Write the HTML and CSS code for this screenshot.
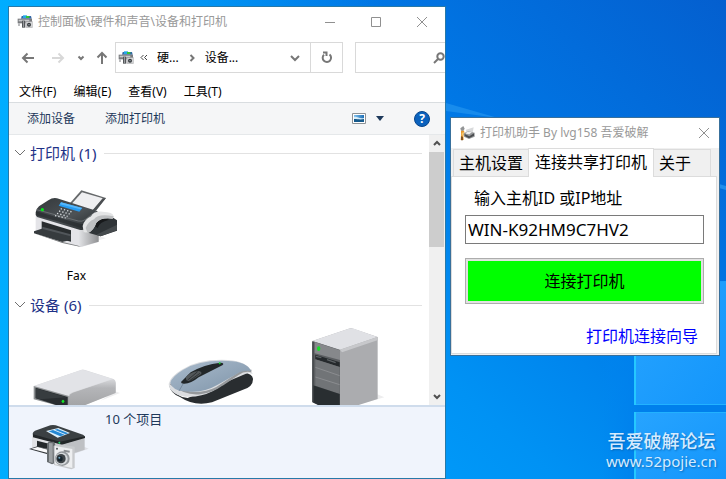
FILE: index.html
```html
<!DOCTYPE html>
<html lang="zh-CN">
<head>
    <meta charset="utf-8">
    <title>设备和打印机</title>
    <link rel="stylesheet" href="styles.css">
</head>
<body>
    <svg width="0" height="0" class="defs" aria-hidden="true">
        <defs>
            <linearGradient id="body-dark" x1="0" y1="0" x2="1" y2="1">
                <stop offset="0" stop-color="#33383b"/><stop offset=".55" stop-color="#4d5256"/><stop offset="1" stop-color="#24282a"/>
            </linearGradient>
            <linearGradient id="side-gray" x1="0" y1="0" x2="1" y2="0">
                <stop offset="0" stop-color="#e4e5e8"/><stop offset="1" stop-color="#8f9092"/>
            </linearGradient>
            <linearGradient id="drive-side" x1="0" y1="0" x2="0" y2="1">
                <stop offset="0" stop-color="#d8d9dc"/><stop offset=".35" stop-color="#b4b5b8"/><stop offset="1" stop-color="#a4a5a7"/>
            </linearGradient>
            <linearGradient id="mouse-top" x1="0" y1="0" x2="1" y2="1">
                <stop offset="0" stop-color="#abbccd"/><stop offset="1" stop-color="#7d93a8"/>
            </linearGradient>
            <linearGradient id="sky" x1="0" y1="0" x2="1" y2="0">
                <stop offset="0" stop-color="#7fc0ee"/><stop offset="1" stop-color="#1d6fb5"/>
            </linearGradient>
            <symbol id="devices" viewBox="0 0 48 48">
                <path d="M14 6h28l2 8H12z" fill="#3468a8"/>
                <path d="M18 4h12v8H18z" fill="#25a8e8"/><path d="M27 6h10v6H27z" fill="#33c532"/>
                <path d="M2 14h43v14H2z" fill="#797b7e"/>
                <path d="M5 17h32v5H5z" fill="#c8c9cb"/>
                <path d="M3 27h6v9H3z" fill="#bbbcbe"/>
                <path d="M15 20h9v21h-9z" fill="#54575a"/><path d="M18 20h3v20h-3z" fill="#989b9e"/>
                <path d="M25 22h22v19H25z" fill="#a9aaac"/><path d="M28 24h19v15H28z" fill="#d3d4d6"/>
                <circle cx="36" cy="32" r="6" fill="#35383b"/><circle cx="36" cy="32" r="2" fill="#aeb9c4"/>
            </symbol>
        </defs>
    </svg>

    <svg class="wallpaper" viewBox="0 0 726 479" preserveAspectRatio="none" aria-hidden="true">
        <defs>
            <linearGradient id="wall" x1="726" y1="0" x2="330" y2="430" gradientUnits="userSpaceOnUse">
                <stop offset="0" stop-color="#045fcf"/>
                <stop offset=".45" stop-color="#0078e6"/>
                <stop offset=".8" stop-color="#0092f4"/>
                <stop offset="1" stop-color="#009cfa"/>
            </linearGradient>
            <linearGradient id="edge" x1="0" y1="0" x2="1" y2="0">
                <stop offset="0" stop-color="#00adff"/><stop offset="1" stop-color="#00a0fa" stop-opacity="0"/>
            </linearGradient>
            <linearGradient id="shade" x1="600" y1="0" x2="640" y2="0" gradientUnits="userSpaceOnUse">
                <stop offset="0" stop-color="#0086f0" stop-opacity="0"/><stop offset="1" stop-color="#0080ec"/>
            </linearGradient>
            <linearGradient id="pane" x1="0" y1="0" x2="1" y2="1">
                <stop offset="0" stop-color="#27a4ff"/><stop offset="1" stop-color="#1496fb"/>
            </linearGradient>
        </defs>
        <rect width="726" height="479" fill="url(#wall)"/>
        <rect width="380" height="479" fill="url(#edge)"/>
        <path d="M446 103l52 15-52-7z" fill="#35a4f5" opacity=".45"/>
        <path d="M719 184l7 2v4l-7-2z" fill="#35a4f5" opacity=".6"/>
        <path d="M600 356h126v123H600z" fill="url(#shade)"/>
        <path d="M635 283l91-2v124h-91z" fill="url(#pane)"/>
        <path d="M635 412h91v67h-91z" fill="url(#pane)"/>
        <path d="M634 356h2v49h-2zM634 412h2v67h-2z" fill="#25c8ff"/>
        <path d="M636 404h90v1h-90zM636 412h90v1h-90z" fill="#22b2ff"/>
    </svg>

    <main class="explorer">
        <header class="titlebar">
            <svg class="app-icon"><use href="#devices"/></svg>
            <h1 class="title">控制面板\硬件和声音\设备和打印机</h1>
            <div class="caption-buttons">
                <button aria-label="最小化"><svg width="12" height="12" viewBox="0 0 12 12"><path d="M1 6.5h10"/></svg></button>
                <button aria-label="最大化"><svg width="12" height="12" viewBox="0 0 12 12"><path d="M1.5 1.5h9v9h-9z"/></svg></button>
                <button aria-label="关闭"><svg width="12" height="12" viewBox="0 0 12 12"><path d="M1 1l10 10M11 1L1 11"/></svg></button>
            </div>
        </header>

        <nav class="navbar">
            <button class="nav-btn" aria-label="后退"><svg width="14" height="12" viewBox="0 0 14 12"><path d="M13 6H2M6.5 1.5L2 6l4.5 4.5"/></svg></button>
            <button class="nav-btn nav-off" aria-label="前进" disabled><svg width="14" height="12" viewBox="0 0 14 12"><path d="M1 6h11M7.5 1.5L12 6l-4.500 4.5"/></svg></button>
            <button class="nav-btn nav-recent" aria-label="最近"><svg width="8" height="6" viewBox="0 0 8 6"><path d="M1.5 1.5L4 4l2.500-2.500"/></svg></button>
            <button class="nav-btn nav-up" aria-label="上移"><svg width="12" height="14" viewBox="0 0 12 14"><path d="M6 13V2M1.5 6.5L6 2l4.5 4.5"/></svg></button>
            <div class="address">
                <svg class="app-icon"><use href="#devices"/></svg>
                <svg class="crumb-more" width="8" height="8" viewBox="0 0 8 8"><path d="M3.5 1L1 3.5 3.5 6M7 1L4.5 3.5 7 6"/></svg>
                <a href="#" class="crumb">硬...</a>
                <svg width="6" height="8" viewBox="0 0 6 8"><path d="M1.5 1l3 3-3 3"/></svg>
                <a href="#" class="crumb">设备...</a>
                <button class="address-drop" aria-label="展开"><svg width="10" height="8" viewBox="0 0 10 8"><path d="M1 2l4 4 4-4"/></svg></button>
                <button class="refresh" aria-label="刷新"><svg width="12" height="13" viewBox="0 0 12 13"><path d="M8.5 3.5A4.2 4.2 0 1 1 3 3.7M2 1.5h3.5V5"/></svg></button>
            </div>
            <div class="search">
                <input type="search" aria-label="搜索">
                <svg width="12" height="12" viewBox="0 0 12 12"><circle cx="7.5" cy="4.5" r="3.2"/><path d="M5 7l-4 4"/></svg>
            </div>
        </nav>

        <div class="menubar">
            <button>文件(F)</button>
            <button>编辑(E)</button>
            <button>查看(V)</button>
            <button>工具(T)</button>
        </div>

        <div class="toolbar">
            <button>添加设备</button>
            <button>添加打印机</button>
            <div class="toolbar-right">
                <button aria-label="视图">
                    <svg width="14" height="11" viewBox="0 0 14 11"><path d="M.5.5h13v10H.5z" fill="#fff" stroke="#8d9296"/><path d="M2 2h10v7H2z" fill="url(#sky)"/><path d="M2 4c3-1 5 2 10 1v2H2z" fill="#d8edf8"/><path d="M2 6c4 0 6 1 10 0v3H2z" fill="#155a8c"/></svg>
                </button>
                <button class="view-drop" aria-label="更多视图"><svg width="8" height="5" viewBox="0 0 8 5"><path d="M0 0h8L4 5z" fill="#1e395b"/></svg></button>
                <button aria-label="帮助" class="help">?</button>
            </div>
        </div>

        <div class="content">
            <div class="groups">
                <h2 class="group-title"><svg width="12" height="8" viewBox="0 0 12 8"><path d="M1 1l5 5 5-5"/></svg>打印机 (1)</h2>
                <ul class="items printers">
                    <li>
                        <svg width="85" height="60" viewBox="99 180 255 180">
                            <path d="M250 345l65-17-28-9z" fill="#eeeeef"/>
                            <path d="M204 226l37-42 74 23-36 42z" fill="#65686a"/>
                            <path d="M211 226l32-36 62 18-30 36z" fill="#efeff1"/>
                            <path d="M305 209l10-2-30 38-10-1z" fill="#4b4f52"/>
                            <path d="M104 262l130 35 59-18v60l-52 15-80-21-57-22z" fill="#e4e4e8"/>
                            <path d="M232 296l61-18v60l-53 15-8-7z" fill="url(#side-gray)"/>
                            <path d="M122 277l88 27v34l-88-22z" fill="#292d2f"/>
                            <path d="M124 293l85 23v18l-85-23z" fill="#51565a"/>
                            <path d="M99 307l23-8 87 23v11l-26 6-84-26z" fill="#363b3e"/>
                            <path d="M99 313l83 25 50 12 8 4-56-12z" fill="#77797b"/>
                            <path d="M104 250q1-10 10-18l28-18q13-9 26-6l120 38q8 6 7 21l-36 31q-12 8-24 4l-127-38q-6-5-4-14z" fill="url(#body-dark)"/>
                            <path d="M105 247l132 37q12 3 24-6l31-22v10l-31 26q-10 8-24 4l-131-37z" fill="#272b2e" opacity=".7"/>
                            <path d="M107 242l125 34q12 3 20-4l34-25" fill="none" stroke="#7d8285" stroke-width="2"/>
                            <path d="M180 220l64 17-9 11-62-18z" fill="#269bf1"/>
                            <path d="M180 220l64 17-6 4-61-15z" fill="#55b6fa"/>
                            <path d="M179 239l34 10M174 246l32 9M168 253l32 9M162 260l32 7" stroke="#d5d9dc" stroke-width="4" stroke-dasharray="4 6"/>
                            <circle cx="124" cy="242" r="5" fill="#08e51b"/>
                            <path d="M244 292l49-33 41 6 14 9v31l-49 17-43-12z" fill="#2f3437"/>
                            <path d="M286 317l62-30v17l-49 18z" fill="#454a4d"/>
                            <path d="M278 289q4-16 28-23l18 6q-30 7-34 25z" fill="#17191b"/>
                            <path d="M245 291q5-20 25-29 7-16 35-14 32 1 33 14l-3 7q-34-5-49 12-8 24-26 31l-12-3z" fill="#e4e5e6"/>
                            <path d="M254 297q8-20 25-26 12-18 59-9l-3 7q-34-5-49 12-8 24-26 31z" fill="#bdbfc1"/>
                        </svg>
                        <span>Fax</span>
                    </li>
                </ul>

                <h2 class="group-title"><svg width="12" height="8" viewBox="0 0 12 8"><path d="M1 1l5 5 5-5"/></svg>设备 (6)</h2>
                <ul class="items devices">
                    <li>
                        <svg width="90" height="36" viewBox="94 255 270 108" role="img" aria-label="硬盘">
                            <path d="M300 350l58-23-15-5z" fill="#eeeeef"/>
                            <path d="M99 306l144-49q5-1 10 1l85 27q7 4 7 11v29l-91 38h-51z" fill="#d8d9dc"/>
                            <path d="M204 338q4-9 12-12l122-41q7 4 7 11v31l-91 36h-50z" fill="url(#drive-side)"/>
                            <path d="M101 306l141-48q5-1 10 1l84 26-121 40q-8 3-12 10z" fill="#e2e3e7"/>
                            <path d="M99 306l105 30v27h-40l-65-17z" fill="#8d9092"/>
                            <path d="M105 311l96 28v24h-35l-61-20z" fill="#292d30"/>
                            <path d="M105 313l92 27-78 6-14-4z" fill="#373c3f"/>
                            <ellipse cx="187" cy="352" rx="4" ry="5" fill="#16e12a"/>
                        </svg>
                    </li>
                    <li>
                        <svg width="88" height="46" viewBox="501 225 264 138" role="img" aria-label="鼠标">
                            <path d="M504 301q16 38 56 41l84-35 86-40q24 2 26 17 1 24-30 33l-93 38q-54 13-96-16-29-10-33-38z" fill="#292d30"/>
                            <path d="M503 300q4-22 39-43 51-33 139-29 60 3 74 42l-13-4-64 27-42 28q-39 20-82 17-49-7-51-38z" fill="#dbdde0"/>
                            <path d="M509 299q45 33 89 28 39-5 65-25l48-32q18-14 40-9" fill="none" stroke="#96999c" stroke-width="7"/>
                            <path d="M508 296q5-19 39-39 51-30 134-26 57 2 69 30-26-3-43 9l-57 32q-46 27-100 20-37-4-42-26z" fill="url(#mouse-top)"/>
                            <path d="M540 294l29-29q40-24 89-29 14 1 6 8l-71 36q-24 20-45 19-8 0-8-5z" fill="#222729"/>
                            <path d="M555 279q10-14 38-18 12 3 7 10l-29 18q-14 5-16-3z" fill="#515659"/>
                            <path d="M560 288l30-25M566 290l31-22" stroke="#1d2022" stroke-width="2"/>
                            <path d="M546 300l-12 21" stroke="#65798d" stroke-width="2"/>
                            <circle cx="656" cy="238" r="3" fill="#11d22a"/>
                        </svg>
                    </li>
                    <li>
                        <svg width="76" height="78" viewBox="266 129 228 234" role="img" aria-label="主机">
                            <path d="M410 363l82-23-21-9z" fill="#ededee"/>
                            <path d="M276 171l116-39 80 27v186l-57 18H294l-18-8z" fill="#abacaf"/>
                            <path d="M276 171l113-38q4-1 8 0l74 26-112 38z" fill="#e0e1e5"/>
                            <path d="M359 197l112-38v10l-106 36z" fill="#c7c8cb"/>
                            <path d="M276 171l83 27v165h-65l-18-8z" fill="#5b5e61"/>
                            <path d="M283 174l76 25v29l-76-20z" fill="#86888b"/>
                            <path d="M285 212l73 23v14l-73-23z" fill="#25292c"/>
                            <path d="M285 226l73 23v81l-73-25z" fill="#717477"/>
                            <path d="M285 250l73 25M285 279l73 23" stroke="#97999b" stroke-width="2"/>
                            <path d="M278 304l80 26v33h-64l-16-8z" fill="#292e31"/>
                            <path d="M287 217l16 4M320 227l26 9" stroke="#5c6164" stroke-width="4"/>
                            <path d="M278 174v180" stroke="#414548" stroke-width="4"/>
                            <ellipse cx="295" cy="194" rx="5" ry="7" fill="#16df28"/>
                        </svg>
                    </li>
                </ul>
            </div>
            <div class="scrollbar">
                <button aria-label="向上滚动"><svg width="8" height="7" viewBox="0 0 8 7"><path d="M1 5l3-3 3 3"/></svg></button>
                <div class="thumb"></div>
                <button aria-label="向下滚动"><svg width="8" height="7" viewBox="0 0 8 7"><path d="M1 2l3 3 3-3"/></svg></button>
            </div>
        </div>

        <footer class="details">
            <svg width="60" height="46" viewBox="87 420 180 138">
                <path d="M220 510l46-16-12-5z" fill="#dddfe5"/>
                <path d="M96 452l82 22 76-18v41l-60 20-98-24z" fill="#bec0c4"/>
                <path d="M96 452l82 22v38l-82-20z" fill="#e1e2e5"/>
                <path d="M98 449q0-5 7-9l46-16q8-2 16 0l82 28q6 3 6 8l-60 18q-8 2-17 0l-74-19q-6-2-6-10z" fill="#3b4043"/>
                <path d="M99 451l81 22 75-16v5l-70 20-86-22z" fill="#222628"/>
                <path d="M138 441l37-9 35 15-37 14z" fill="#dff1fd"/>
                <path d="M146 442l13-4 35 14-13 5zM164 437l8-2 33 13-8 3z" fill="#2588d4"/>
                <path d="M111 470l48 12v16l-48-10z" fill="#25292b"/>
                <path d="M87 495l25-8 48 13-17 11z" fill="#34383b"/><path d="M94 494l19-5 42 11-12 7z" fill="#fafafb"/>
                <circle cx="178" cy="476" r="3" fill="#27df72"/>
                <path d="M141 479l5-6h15l5 7v57l-10 4-15-7z" fill="#686d70"/><path d="M147 477l11 1v59l-11-3z" fill="#9da1a4"/>
                <path d="M161 486l10-6 53 8v64l-10 4-52-13z" fill="#c8cacd"/>
                <path d="M165 486l52 9v57l-52-11z" fill="#edeef0"/>
                <path d="M191 500l18 3" stroke="#8a8d90" stroke-width="6"/><circle cx="171" cy="494" r="3" fill="#53585c"/>
                <circle cx="187" cy="524" r="22" fill="#94989c"/><circle cx="185" cy="524" r="18" fill="#d7dadd"/>
                <circle cx="183" cy="524" r="14" fill="#3d4347"/><circle cx="180" cy="524" r="8" fill="#17232c"/><circle cx="178" cy="521" r="3" fill="#72a4be"/>
            </svg>
            <p>10 个项目</p>
        </footer>
    </main>

    <section class="dialog">
        <header class="titlebar dialog-titlebar">
            <svg class="app-icon" viewBox="0 0 48 48">
                <path d="M4 10L13 3l4 8-4 7-7-1z" fill="#939596"/><path d="M6 17h9l2 9-4 6 1 13H5l1-14z" fill="#e79a30"/>
                <path d="M8 24l6-3 2 6-8 7z" fill="#f7c66b"/><path d="M6 34l6 2v10H6z" fill="#80501f"/>
                <path d="M21 14l23-7-4 22-17 1z" fill="#d9dadb"/><path d="M14 25l13-6 20 4v12L30 42l-15-7z" fill="#97999b"/>
                <path d="M17 27l14 7 14-9v7l-15 8-13-7z" fill="#4b4d50"/><path d="M24 20l15 1-8 7-11-2z" fill="#ececed"/>
            </svg>
            <h2 class="title">打印机助手 By lvg158 吾爱破解</h2>
            <div class="caption-buttons">
                <button aria-label="关闭"><svg width="12" height="12" viewBox="0 0 12 12"><path d="M1 1l10 10M11 1L1 11"/></svg></button>
            </div>
        </header>
        <div class="tabs" role="tablist">
            <button role="tab">主机设置</button>
            <button role="tab" class="active" aria-selected="true">连接共享打印机</button>
            <button role="tab" class="tab-about">关于</button>
        </div>
        <form class="panel">
            <label for="host">输入主机ID 或IP地址</label>
            <input id="host" type="text" value="WIN-K92HM9C7HV2">
            <button type="button" class="connect">连接打印机</button>
            <a href="#">打印机连接向导</a>
        </form>
    </section>

    <div class="watermark">
        <p class="forum">吾爱破解论坛</p>
        <p class="site">www.52pojie.cn</p>
    </div>
</body>
</html>
```
FILE: styles.css
```css
* {
    box-sizing: border-box;
}
body {
    margin: 0;
    min-height: 100vh;
    overflow: hidden;
    background: #0086f0;
    color: #000;
    font: 12px/18px "Noto Sans", "Noto Sans CJK SC", sans-serif;
}
h1, h2, p, ul {
    margin: 0;
    padding: 0;
    font-weight: normal;
}
button, input {
    font: inherit;
    color: inherit;
}
button {
    display: flex;
    align-items: center;
    justify-content: center;
    padding: 0;
    border: 0;
    background: none;
    white-space: nowrap;
}
svg {
    display: block;
    flex: none;
}
.defs {
    position: absolute;
}
.wallpaper {
    position: absolute;
    inset: 0;
    width: 100%;
    height: 100%;
}

/* windows */
.explorer {
    position: absolute;
    top: 6px;
    right: 280px;
    bottom: 0;
    left: 8px;
    display: flex;
    flex-direction: column;
    border: 1px solid #2779a8;
    background: #fff;
    overflow: hidden;
}
.titlebar {
    display: flex;
    align-items: center;
    height: 29px;
    padding-left: 8px;
    color: #999;
}
.app-icon {
    width: 16px;
    height: 16px;
}
.title {
    flex: 1;
    margin-left: 5px;
    font-size: 12px;
    white-space: nowrap;
}
.caption-buttons {
    display: flex;
}
.caption-buttons button {
    width: 46px;
    height: 29px;
}
.caption-buttons svg {
    fill: none;
    stroke: #909090;
}

/* navigation */
.navbar {
    display: flex;
    align-items: center;
    height: 43px;
    padding-left: 4px;
}
.nav-btn {
    flex: none;
    width: 30px;
    height: 30px;
}
.nav-recent {
    width: 16px;
}
.nav-up {
    width: 26px;
}
.navbar > button svg,
.address svg:not(.app-icon),
.search svg {
    fill: none;
    stroke: #777;
    stroke-width: 2;
}
.navbar > .nav-off svg {
    stroke: #d8d8d8;
}
.address {
    flex: 1;
    display: flex;
    align-items: center;
    min-width: 0;
    height: 31px;
    padding-left: 2px;
    border: 1px solid #d9d9d9;
    white-space: nowrap;
}
.address svg.crumb-more {
    margin: 0 9px 0 6px;
    stroke: #444;
    stroke-width: 1;
}
.crumb {
    margin-right: 10px;
    color: #000;
    text-decoration: none;
}
.address svg + .crumb:last-of-type {
    margin-left: 10px;
}
.address-drop {
    width: 30px;
    margin-left: auto;
}
.refresh {
    width: 32px;
    height: 29px;
    border-left: 1px solid #d9d9d9;
}
.search {
    flex: 0 0 90px;
    display: flex;
    align-items: center;
    min-width: 0;
    height: 31px;
    margin-left: 12px;
    border: 1px solid #d9d9d9;
    border-right: 0;
}
.search input {
    flex: 1;
    width: 0;
    min-width: 0;
    padding: 0;
    border: 0;
    outline: 0;
    background: none;
}
.menubar {
    display: flex;
    align-items: center;
    gap: 17px;
    height: 23px;
    padding: 2px 0 0 10px;
}
.toolbar {
    display: flex;
    align-items: center;
    gap: 30px;
    height: 33px;
    padding: 0 15px 0 18px;
    border-top: 1px solid #d9dde0;
    border-bottom: 1px solid #e5e8ea;
    background: #f5f6f7;
    color: #1e395b;
}
.toolbar-right {
    display: flex;
    align-items: center;
    margin-left: auto;
}
.view-drop {
    margin: 0 30px 0 10px;
}
.help {
    width: 16px;
    height: 16px;
    border: 1px solid #07458c;
    border-radius: 50%;
    background: #0b62bd;
    color: #fff;
    font-weight: bold;
}

/* device list */
.content {
    flex: 1;
    display: flex;
    min-height: 0;
    overflow: hidden;
}
.groups {
    flex: 1;
    display: flex;
    flex-direction: column;
    padding-top: 7px;
}
.group-title {
    display: flex;
    align-items: center;
    height: 22px;
    margin-right: 7px;
    padding-left: 5px;
    color: #1e3287;
    font-size: 15px;
    line-height: 22px;
}
.group-title svg {
    margin-right: 4px;
    fill: none;
    stroke: #707070;
}
.group-title::after {
    content: "";
    flex: 1;
    height: 1px;
    margin-left: 8px;
    background: #e2e2e2;
}
.items {
    display: grid;
    grid-template-columns: repeat(auto-fill, 135px);
    list-style: none;
}
.items li {
    display: flex;
    flex-direction: column;
    align-items: center;
    gap: 18px;
}
.printers {
    padding: 25px 0 9px;
}
.devices {
    flex: 1;
    align-items: end;
}
.scrollbar {
    display: flex;
    flex-direction: column;
    width: 16px;
    background: #f0f0f0;
}
.scrollbar button {
    width: 16px;
    height: 17px;
}
.scrollbar svg {
    fill: none;
    stroke: #505050;
    stroke-width: 2;
}
.thumb {
    height: 35%;
    margin-right: 1px;
    margin-bottom: auto;
    background: #cdcdcd;
}
.details {
    display: flex;
    gap: 16px;
    height: 73px;
    padding: 3px 20px;
    border-top: 2px solid #cfdcec;
    background: #f0f4fc;
    color: #1e395b;
    font-size: 13px;
}
.details svg {
    margin-top: 14px;
}

/* connection helper */
.dialog {
    position: absolute;
    top: 117px;
    right: 6px;
    left: 450px;
    padding-bottom: 1px;
    border: 1px solid #38709c;
    background: #f0f0f0;
    font-size: 16px;
    line-height: 24px;
}
.dialog-titlebar {
    height: 30px;
    background: #fff;
}
.dialog-titlebar .caption-buttons button {
    width: 30px;
}
.tabs {
    display: flex;
    align-items: flex-end;
    padding-left: 2px;
}
.tabs button {
    height: 27px;
    padding: 0 5px;
    border: 1px solid #dcdcdc;
    border-right: 0;
    border-bottom: 0;
}
.tabs .active {
    height: 29px;
    margin-bottom: -1px;
    padding: 0 6px 2px;
    border-right: 1px solid #dcdcdc;
    background: #fff;
    z-index: 1;
}
.tabs .tab-about {
    padding: 0 19px 0 5px;
    border-left: 0;
    border-right: 1px solid #dcdcdc;
}
.panel {
    display: flex;
    flex-direction: column;
    margin-right: 2px;
    padding: 9px 12px 5px 13px;
    border: 1px solid #dcdcdc;
    background: #fff;
}
.panel label {
    padding-left: 9px;
}
.panel input {
    height: 29px;
    margin-top: 5px;
    padding: 0 2px;
    border: 1px solid #7a7a7a;
    border-radius: 0;
    outline: 0;
    font-size: 17px;
}
.connect {
    height: 46px;
    margin: 14px 0 20px;
    border: 1px solid #adadad;
    background: #0f0;
    box-shadow: inset 0 0 0 2px #e1e1e1;
}
.panel a {
    align-self: flex-end;
    padding-right: 6px;
    color: #00f;
    text-decoration: none;
}
.watermark {
    position: absolute;
    right: 9px;
    bottom: 9px;
    color: #d5ebff;
    text-align: center;
    text-shadow: 1px 1px 2px #0868b8;
}
.forum {
    font-size: 18px;
    font-weight: 500;
    line-height: 22px;
}
.site {
    font-size: 15px;
    line-height: 18px;
}
```
